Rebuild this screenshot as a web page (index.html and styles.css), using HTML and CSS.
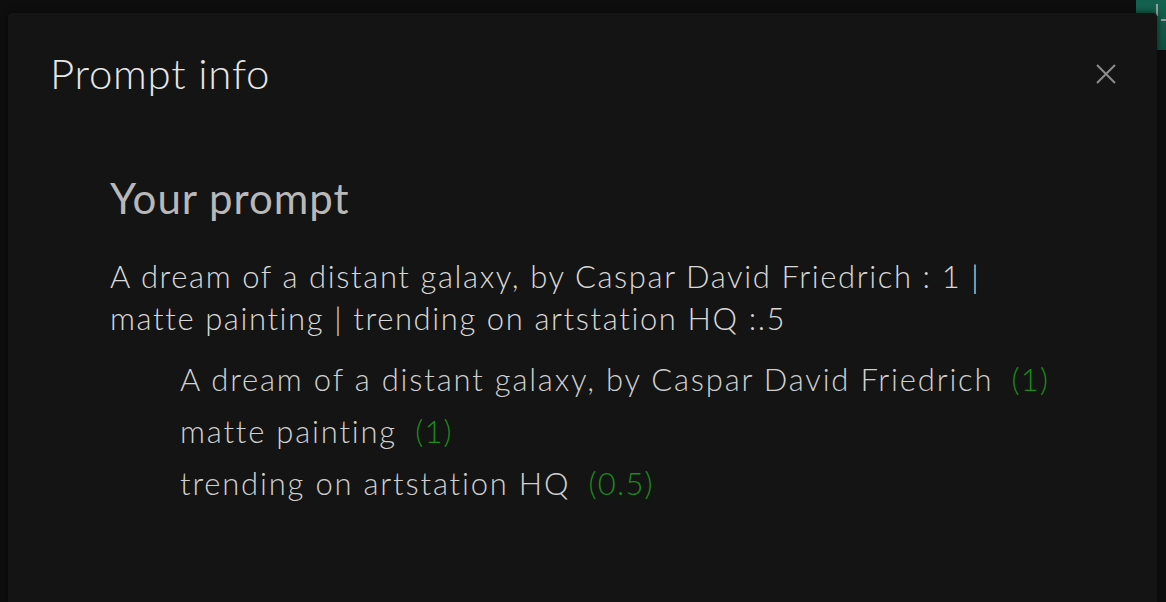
FILE: index.html
```html
<!DOCTYPE html>
<html>
<head>
<meta charset="utf-8">
<link rel="stylesheet" href="styles.css">
</head>
<body>
<div class="corner-btn"><span class="corner-v"></span><span class="corner-h"></span></div>
<div class="modal">
  <div class="modal-header">
    <h1 class="modal-title">Prompt info</h1>
    <button class="close-btn" aria-label="Close">
      <svg width="20" height="20" viewBox="0 0 20 20"><path d="M1 1L19 19M19 1L1 19" stroke="#8c8c8c" stroke-width="2" fill="none"/></svg>
    </button>
  </div>
  <div class="modal-body">
    <h2 class="section-title">Your prompt</h2>
    <p class="prompt-text">A dream of a distant galaxy, by Caspar David Friedrich : 1 | matte painting | trending on artstation HQ :.5</p>
    <ul class="parts">
      <li>A dream of a distant galaxy, by Caspar David Friedrich <span class="weight">(1)</span></li>
      <li>matte painting <span class="weight">(1)</span></li>
      <li>trending on artstation HQ <span class="weight">(0.5)</span></li>
    </ul>
  </div>
</div>
</body>
</html>
```

FILE: styles.css
```css
html, body {
  margin: 0;
  height: 100%;
  overflow: hidden;
}
body {
  background: #0e0e0e;
  font-family: Lato, "Open Sans", sans-serif;
  font-weight: 300;
  padding: 13px 0 0 8px;
  box-sizing: border-box;
}
.corner-btn {
  position: absolute;
  top: 0;
  left: 1136px;
  width: 30px;
  height: 50px;
  background: linear-gradient(#136250, #0f4f40);
}
.corner-v {
  position: absolute;
  left: 20px;
  top: 4px;
  width: 2px;
  height: 12px;
  background: #8fa39c;
}
.corner-h {
  position: absolute;
  left: 25px;
  top: 19px;
  width: 5px;
  height: 2px;
  background: #8fa39c;
}
.modal {
  position: relative;
  width: 1149px;
  height: 589px;
  background: #141414;
  border-radius: 4px 4px 0 0;
  box-shadow: 0 0 6px rgba(0,0,0,0.6);
  box-sizing: border-box;
  padding: 0 0 0 42px;
}
.modal-header {
  display: flex;
  align-items: center;
  justify-content: space-between;
  height: 122px;
  padding-right: 41px;
}
.modal-title {
  margin: 0;
  font-weight: 300;
  font-size: 42px;
  color: #e6e6e6;
  letter-spacing: 0.7px;
  line-height: 1;
  padding-bottom: 2px;
}
.close-btn {
  background: none;
  border: 0;
  padding: 0;
  width: 20px;
  height: 20px;
  display: flex;
  cursor: pointer;
}
.modal-body {
  padding: 38px 0 0 60px;
}
.section-title {
  margin: 0;
  font-weight: 400;
  font-size: 42px;
  line-height: 50px;
  color: #b8b8b8;
  letter-spacing: 1px;
}
.prompt-text {
  margin: 32px 0 0;
  width: 900px;
  font-size: 31px;
  line-height: 42px;
  color: #d8d8d8;
  letter-spacing: 1.6px;
}
.parts {
  list-style: none;
  margin: 14px 0 0;
  padding: 0 0 0 70px;
}
.parts li {
  font-size: 31px;
  line-height: 52px;
  color: #d0d0d0;
  letter-spacing: 1.8px;
}
.weight {
  color: #1a8c1a;
  margin-left: 8px;
  letter-spacing: 1.2px;
}
```
